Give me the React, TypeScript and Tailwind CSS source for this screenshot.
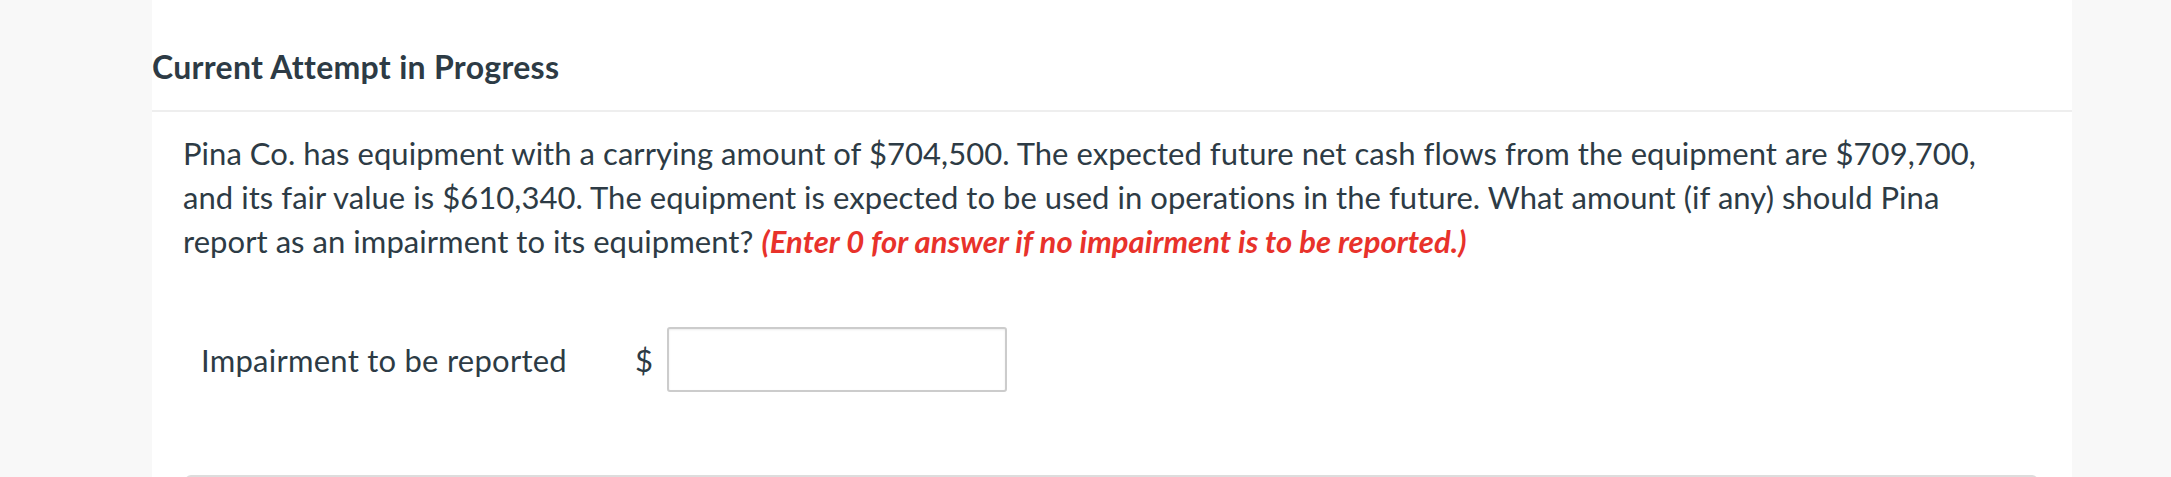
import React from "react";

export default function App() {
  return (
    <div
      className="min-h-screen w-full bg-[#f8f8f8] text-[#2d3b45]"
      style={{ fontFamily: "Lato, 'Open Sans', sans-serif" }}
    >
      <div className="ml-[152px] w-[1920px] bg-white pb-10">
        <div className="border-b-2 border-[#eeeeee] pt-[48px] pb-[24px]">
          <h2 className="text-[32px] leading-[38px] font-bold tracking-[0.3px]">Current Attempt in Progress</h2>
        </div>
        <div className="px-[31px] pt-[19px]">
          <p className="text-[31px] leading-[44px] pr-[11px] tracking-[0.05px]">
            Pina Co. has equipment with a carrying amount of $704,500. The expected future net cash flows from the
            equipment are $709,700, and its fair value is $610,340. The equipment is expected to be used in operations
            in the future. What amount (if any) should Pina report as an impairment to its equipment?{" "}
            <span className="font-bold italic text-[#e8322b]">
              (Enter 0 for answer if no impairment is to be reported.)
            </span>
          </p>
          <div className="mt-[64px] flex items-center pl-[18px]">
            <span className="text-[31px] leading-[36px] tracking-[0.25px]">Impairment to be reported</span>
            <span className="ml-[68px] text-[31px] leading-[36px]">$</span>
            <input
              type="text"
              className="ml-[14px] h-[65px] w-[340px] rounded-[3px] border-2 border-[#cccccc] bg-white shadow-[inset_0_1px_2px_rgba(0,0,0,0.08)] outline-none"
            />
          </div>
          <div className="mt-[83px] h-[120px] rounded-md border-2 border-[#dddddd] w-[1853px] ml-[2px]" />
        </div>
      </div>
    </div>
  );
}
